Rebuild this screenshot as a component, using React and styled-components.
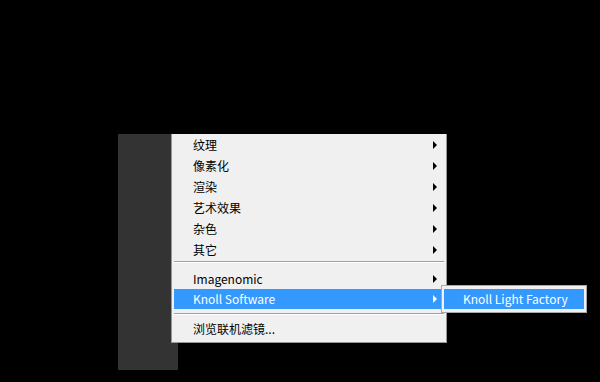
import styled, { createGlobalStyle } from 'styled-components';

const GlobalStyle = createGlobalStyle`
  html, body {
    margin: 0;
    padding: 0;
    background: #000;
  }
  body {
    font-family: "Noto Sans CJK SC", "Noto Sans", sans-serif;
    font-size: 12px;
  }
`;

const groups = [
  [
    { label: '纹理', sub: true },
    { label: '像素化', sub: true },
    { label: '渲染', sub: true },
    { label: '艺术效果', sub: true },
    { label: '杂色', sub: true },
    { label: '其它', sub: true },
  ],
  [
    { label: 'Imagenomic', sub: true },
    { label: 'Knoll Software', sub: true, active: true, flyout: 'Knoll Light Factory' },
  ],
  [{ label: '浏览联机滤镜...' }],
];

const App = () => {
  return (
    <Page>
      <GlobalStyle />
      <Stage>
        <DarkPanel />
        <Menu>
          {groups.map((group, gi) => (
            <Group key={gi}>
              {gi > 0 && <Separator $first={gi === 1} />}
              {group.map((item) => (
                <Item key={item.label} $active={item.active} $tall={gi === 0}>
                  <Label>{item.label}</Label>
                  {item.sub && <Arrow $active={item.active} />}
                  {item.flyout && (
                    <SubMenu>
                      <SubItem>{item.flyout}</SubItem>
                    </SubMenu>
                  )}
                </Item>
              ))}
            </Group>
          ))}
        </Menu>
      </Stage>
    </Page>
  );
};

const Page = styled.div`
  width: 600px;
  height: 382px;
  box-sizing: border-box;
  padding: 134px 0 0 118px;
  background: #000;
  overflow: hidden;
`;

const Stage = styled.div`
  position: relative;
  width: 60px;
`;

const DarkPanel = styled.div`
  width: 60px;
  height: 236px;
  background: #333333;
`;

// 弹出菜单，叠在左侧面板之上
const Menu = styled.div`
  position: absolute;
  left: 53px;
  top: 0;
  width: 276px;
  height: 209px;
  box-sizing: border-box;
  background: #f0f0f0;
  border: 1px solid #979797;
  border-top: none;
  display: flex;
  flex-direction: column;
`;

const Group = styled.div`
  display: flex;
  flex-direction: column;
`;

const Separator = styled.div`
  margin: ${(p) => (p.$first ? '1px 2px 6px' : '4px 2px 4px')};
  height: 1px;
  background: #a0a0a0;
  border-bottom: 1px solid #ffffff;
`;

const Item = styled.div`
  position: relative;
  display: flex;
  align-items: center;
  height: ${(p) => (p.$tall ? '21px' : '20px')};
  margin: 0 2px;
  padding-left: 19px;
  color: ${(p) => (p.$active ? '#ffffff' : '#000000')};
  background: ${(p) => (p.$active ? '#3399ff' : 'transparent')};
`;

const Label = styled.span`
  flex: 1;
  line-height: 20px;
  white-space: nowrap;
`;

const Arrow = styled.span`
  position: absolute;
  right: 7px;
  top: 50%;
  margin-top: -4px;
  width: 0;
  height: 0;
  border-top: 4px solid transparent;
  border-bottom: 4px solid transparent;
  border-left: 4px solid ${(p) => (p.$active ? '#ffffff' : '#000000')};
`;

// 子菜单弹出层
const SubMenu = styled.div`
  position: absolute;
  left: 267px;
  top: -4px;
  width: 146px;
  height: 28px;
  box-sizing: border-box;
  padding: 3px 2px;
  background: #f0f0f0;
  border: 1px solid #a8a8a8;
  z-index: 2;
`;

const SubItem = styled.div`
  height: 20px;
  line-height: 20px;
  padding-left: 19px;
  background: #3399ff;
  color: #ffffff;
  white-space: nowrap;
`;

export default App;
